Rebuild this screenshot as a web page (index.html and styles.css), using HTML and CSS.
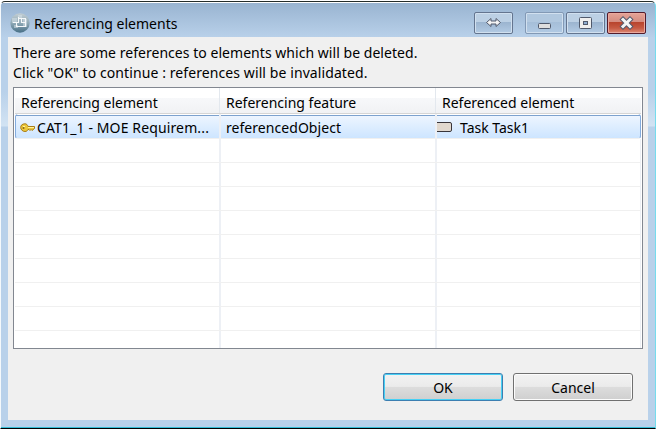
FILE: index.html
```html
<!DOCTYPE html>
<html lang="en">
<head>
<meta charset="utf-8">
<title>Referencing elements</title>
<link rel="stylesheet" href="styles.css">
</head>
<body>
<div class="window">
  <header class="titlebar">
    <svg class="app-icon" width="20" height="20" viewBox="0 0 20 20">
      <defs><linearGradient id="globe" x1="0" y1="0" x2="0" y2="1"><stop offset="0" stop-color="#c3ced3"/><stop offset=".5" stop-color="#8fa9b6"/><stop offset="1" stop-color="#476f86"/></linearGradient></defs>
      <circle cx="10" cy="10" r="9.7" fill="url(#globe)"/>
      <path d="M2 5h5v5H2zM8 2h4v3H8zM13 6h4v8h-4zM4 12h4v3H4z" fill="#dce6eb" opacity=".5"/>
      <path d="M8.500 4v5.500H3M8.500 5.500h3v4h4v4h-9v-4M11.500 5.500h4v4" fill="none" stroke="#f5f8fa" stroke-width="1.1"/>
    </svg>
    <h1 class="title">Referencing elements</h1>
    <div class="controls">
      <button class="control resize" aria-label="Resize"><svg width="37" height="20" viewBox="0 0 37 20"><path d="M11.500 9.500l4.500-4v2.500h5V5.500l4.500 4-4.500 4V11h-5v2.500z" fill="#f4f4f4" stroke="#50596b"/></svg></button>
      <button class="control faded" aria-label="Minimize"><svg width="37" height="20" viewBox="0 0 37 20"><rect x="12.500" y="10.500" width="12" height="5" rx="1" fill="#dedede" stroke="#50596b"/></svg></button>
      <button class="control" aria-label="Maximize"><svg width="37" height="20" viewBox="0 0 37 20"><rect x="12.500" y="4.500" width="12" height="11" rx="1" fill="#eee" stroke="#50596b"/><rect x="16.500" y="8.500" width="4" height="3" fill="#8eacd0" stroke="#50596b"/></svg></button>
      <button class="control close" aria-label="Close"><svg width="37" height="20" viewBox="0 0 37 20"><path d="M15 6.500l7 7M22 6.500l-7 7" stroke="#555a6c" stroke-width="5" stroke-linecap="square"/><path d="M15 6.500l7 7M22 6.500l-7 7" stroke="#f4f4f4" stroke-width="3" stroke-linecap="square"/></svg></button>
    </div>
  </header>
  <main class="client">
    <p class="message"><span class="line-one">There are some references to elements which will be deleted.</span><br><span class="line-two">Click "OK" to continue : references will be invalidated.</span></p>
    <div class="table">
      <div class="row head">
        <div class="cell"><span class="h-element">Referencing element</span></div>
        <div class="cell"><span class="h-feature">Referencing feature</span></div>
        <div class="cell"><span class="h-target">Referenced element</span></div>
      </div>
      <div class="row selected">
        <div class="cell with-key"><svg class="key" width="16" height="10" viewBox="0 0 16 10"><path d="M5 .8C2 .8.700 2.500.700 4.500S2.500 8.500 5 8.500c1.500 0 2.500-.7 3-2h1l1 1 1-1 1 1 2.500-2V3.500H8C7.500 1.800 6.500.8 5 .8z" fill="#ecc83b" stroke="#a97d18"/><path d="M3 3.500h2M8 4.500h6" stroke="#fff3a2"/><circle cx="3.500" cy="5" r="1" fill="#8d6719"/></svg><span class="c-element">CAT1_1 - MOE Requirem...</span></div>
        <div class="cell"><span class="c-feature">referencedObject</span></div>
        <div class="cell with-task"><svg class="task" width="15" height="10" viewBox="0 0 15 10"><path d="M0 .5h13q1.500 0 1.500 1.500v6q0 1.500-1.500 1.500H0" fill="#e1d8ce" stroke="#39353a"/></svg><span class="c-target">Task Task1</span></div>
      </div>
      <div class="row"><div class="cell"></div><div class="cell"></div><div class="cell"></div></div>
      <div class="row"><div class="cell"></div><div class="cell"></div><div class="cell"></div></div>
      <div class="row"><div class="cell"></div><div class="cell"></div><div class="cell"></div></div>
      <div class="row"><div class="cell"></div><div class="cell"></div><div class="cell"></div></div>
      <div class="row"><div class="cell"></div><div class="cell"></div><div class="cell"></div></div>
      <div class="row"><div class="cell"></div><div class="cell"></div><div class="cell"></div></div>
      <div class="row"><div class="cell"></div><div class="cell"></div><div class="cell"></div></div>
      <div class="row"><div class="cell"></div><div class="cell"></div><div class="cell"></div></div>
      <div class="row last"><div class="cell"></div><div class="cell"></div><div class="cell"></div></div>
    </div>
    <footer class="actions"><button class="action default">OK</button><button class="action">Cancel</button></footer>
  </main>
</div>
</body>
</html>
```
FILE: styles.css
```css
* { box-sizing: border-box; }
body { margin: 0; height: 431px; overflow: hidden; background: #fff; padding-top: 1px; font: 14px/20px "Noto Sans", "Open Sans", sans-serif; color: #000; }
.window { height: 428px; border-top: 1px solid #252d2b; border-bottom: 1px solid #000; border-left: 1px solid #f5f9fc; border-right: 1px solid #75dced; border-radius: 5px 5px 0 0; padding: 0 7px 7px; background: linear-gradient(#fff 0 1px, #99b4d1 1px, #b9d1ea 36px, #b9d1ea 90px, #d2e3f3 124px, #b9d1ea 125px); box-shadow: inset 0 -1px #35bdd5; }
.titlebar { height: 35px; display: flex; align-items: flex-start; }
.app-icon { margin: 11px 0 0 2px; }
.title { margin: 12px 0 0 4px; font-size: 14px; font-weight: 400; line-height: 20px; white-space: nowrap; }
.controls { margin: 10px 2px 0 auto; display: flex; gap: 2px; }
.control { width: 39px; height: 22px; padding: 0; border: 1px solid #64758f; border-radius: 2px; background: linear-gradient(#bcd0e4 0 45%, #9bb4cf 46%, #b3cbe4); box-shadow: inset 0 0 0 1px #d1e0ef; }
.control svg { display: block; }
.resize { margin-right: 10px; }
.faded { border-color: #8299b5; background: linear-gradient(#b1c8df 0 45%, #a5bed8 46%, #b1cae4); }
.close { border-color: #531b2b; background: linear-gradient(#e5a397, #d48c80 45%, #b8432c 46%, #c65a43 75%, #dc8975); box-shadow: inset 0 0 0 1px #eaa99e; }
.client { height: 383px; background: #f0f0f0; padding: 6px 5px 5px; }
.message { margin: 0 0 4px; height: 40px; white-space: nowrap; }
.line-one { letter-spacing: .04px; }
.line-two { letter-spacing: .09px; }
.table { width: 630px; height: 262px; border: 1px solid #828790; background: #fff; padding: 0 1px; overflow: hidden; }
.row { display: grid; grid-template-columns: 206px 216px 1fr; height: 24px; border-bottom: 1px solid #f0f0f0; }
.cell { border-right: 2px solid #edf0f5; padding-left: 5px; white-space: nowrap; display: flex; align-items: center; }
.cell:last-child { border-right-width: 1px; }
.head { height: 26px; grid-template-columns: 205px 216px 1fr; border-bottom: 1px solid #d5d5d5; background: linear-gradient(#fff 0 10px, #f7f8fa 10px, #f1f2f4); }
.head .cell { border-right: 1px solid #e3e8ee; padding: 4px 0 0 6px; }
.selected { height: 25px; background: linear-gradient(#fff 0 1px, #7da2ce 1px 2px, #edf5ff 2px, #cde5ff); border-left: 1px solid #84acdd; border-right: 1px solid #84acdd; border-radius: 3px; grid-template-columns: 205px 216px 1fr; }
.selected .cell { padding-top: 4px; }
.selected .cell:last-child, .head .cell:last-child { border-right: 0; }
.selected .with-key { padding-left: 4px; }
.key { margin-right: 1px; }
.c-element { letter-spacing: .13px; }
.c-feature { letter-spacing: .05px; }
.selected .with-task { padding-left: 0; }
.task { margin: -2px 8px 0 0; }
.actions { display: flex; justify-content: flex-end; gap: 10px; padding: 24px 10px 0 0; }
.action { width: 120px; height: 28px; padding: 1px 0 0; border: 1px solid #707070; border-radius: 3px; background: linear-gradient(#f2f2f2, #ebebeb 48%, #dddddd 49%, #cfcfcf); box-shadow: inset 0 0 0 1px #fcfcfc; font: inherit; color: inherit; }
.default { border-color: #3c7fb1; box-shadow: inset 0 0 0 1px #47d0f4; }
```
